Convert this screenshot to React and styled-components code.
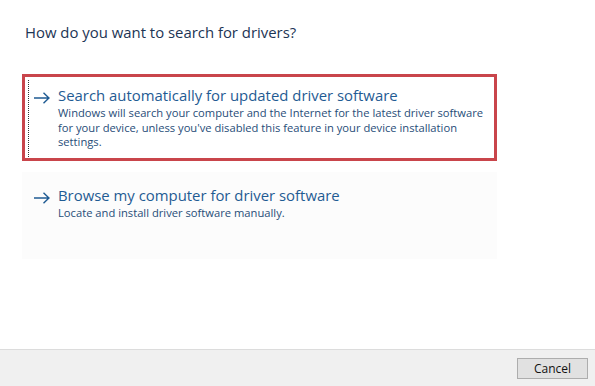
import React from "react";
import styled, { createGlobalStyle } from "styled-components";

const GlobalStyle = createGlobalStyle`
  html, body {
    margin: 0;
    padding: 0;
    background: #ffffff;
  }
  body {
    font-family: "Segoe UI", "Open Sans", "Noto Sans", sans-serif;
  }
`;

const Window = styled.div`
  width: 595px;
  height: 386px;
  display: flex;
  flex-direction: column;
  background: #ffffff;
`;

const Content = styled.div`
  flex: 1;
  padding: 22px 98px 0 22px;
  display: flex;
  flex-direction: column;
`;

const Heading = styled.h1`
  margin: 0 0 0 3px;
  font-size: 14.9px;
  font-weight: 400;
  color: #1c3555;
  line-height: 20px;
`;

const Options = styled.div`
  margin-top: 32px;
  display: flex;
  flex-direction: column;
  gap: 11px;
`;

const Option = styled.div`
  position: relative;
  height: 87px;
  box-sizing: border-box;
  display: flex;
  align-items: flex-start;
  gap: 7px;
  padding: ${(p) => (p.$selected ? "8px 10px 0 8px" : "13px 13px 0 11px")};
  border: ${(p) => (p.$selected ? "3px solid #c9454b" : "none")};
  background: ${(p) => (p.$selected ? "#ffffff" : "#fcfcfc")};
  cursor: pointer;
`;

const FocusLine = styled.div`
  position: absolute;
  left: 3px;
  top: 3px;
  bottom: 1px;
  border-left: 1px dotted #333333;
`;

const Arrow = styled.svg`
  flex: none;
  width: 18px;
  height: 12px;
  margin-top: 7px;
`;

const Texts = styled.div`
  display: flex;
  flex-direction: column;
`;

const Title = styled.div`
  font-size: 14.9px;
  color: #1f5b93;
  line-height: 20px;
  margin-bottom: 1px;
`;

const Desc = styled.div`
  font-size: 11.2px;
  color: #274d78;
  line-height: 14.5px;
`;

const Footer = styled.div`
  height: 36px;
  border-top: 1px solid #dcdcdc;
  background: #f0f0f0;
  display: flex;
  align-items: center;
  justify-content: flex-end;
  padding-right: 7px;
`;

const Button = styled.button`
  width: 71px;
  height: 21px;
  border: 1px solid #adadad;
  background: #e1e1e1;
  font-family: "Segoe UI", "Open Sans", "Noto Sans", sans-serif;
  font-size: 12px;
  color: #111111;
  padding: 0;
  margin-top: 1px;
`;

function ArrowIcon() {
  return (
    <Arrow viewBox="0 0 18 12">
      <path
        d="M1 6h15.5M10.5 0.8l5.4 5.2-5.4 5.2"
        fill="none"
        stroke="#1f5b93"
        strokeWidth="1.4"
      />
    </Arrow>
  );
}

const options = [
  {
    title: "Search automatically for updated driver software",
    desc: [
      "Windows will search your computer and the Internet for the latest driver software",
      "for your device, unless you've disabled this feature in your device installation",
      "settings.",
    ],
    selected: true,
  },
  {
    title: "Browse my computer for driver software",
    desc: ["Locate and install driver software manually."],
    selected: false,
  },
];

export default function App() {
  return (
    <>
      <GlobalStyle />
      <Window>
        <Content>
          <Heading>How do you want to search for drivers?</Heading>
          <Options>
            {options.map((o) => (
              <Option key={o.title} $selected={o.selected}>
                {o.selected && <FocusLine />}
                <ArrowIcon />
                <Texts>
                  <Title>{o.title}</Title>
                  {o.desc.map((line) => (
                    <Desc key={line}>{line}</Desc>
                  ))}
                </Texts>
              </Option>
            ))}
          </Options>
        </Content>
        <Footer>
          <Button>Cancel</Button>
        </Footer>
      </Window>
    </>
  );
}
